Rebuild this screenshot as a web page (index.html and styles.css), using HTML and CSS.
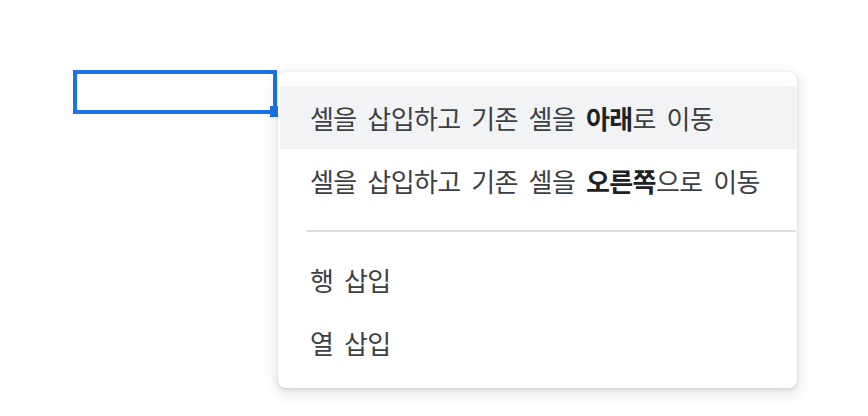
FILE: index.html
```html
<!DOCTYPE html>
<html lang="ko">
<head>
<meta charset="utf-8">
<title>셀 삽입</title>
<link rel="stylesheet" href="styles.css">
</head>
<body>
<div class="sheet">
  <div class="cell-select"><span class="fill-handle"></span></div>
  <div class="menu" role="menu">
    <div class="item active" role="menuitem"><span class="label">셀을 삽입하고 기존 셀을 <b>아래</b>로 이동</span></div>
    <div class="item" role="menuitem"><span class="label">셀을 삽입하고 기존 셀을 <b>오른쪽</b>으로 이동</span></div>
    <div class="sep"></div>
    <div class="item" role="menuitem"><span class="label">행 삽입</span></div>
    <div class="item" role="menuitem"><span class="label">열 삽입</span></div>
  </div>
</div>
</body>
</html>
```
FILE: styles.css
```css
html, body {
  margin: 0;
  padding: 0;
  background: #ffffff;
}
.sheet {
  position: relative;
  width: 868px;
  height: 416px;
  overflow: hidden;
  font-family: "Noto Sans CJK KR", "Noto Sans", sans-serif;
}
.cell-select {
  position: absolute;
  left: 73px;
  top: 70px;
  width: 196px;
  height: 36px;
  border: 4px solid #1a73e8;
}
.fill-handle {
  position: absolute;
  right: -8px;
  bottom: -7px;
  width: 11px;
  height: 11px;
  background: #1a73e8;
}
.menu {
  position: absolute;
  left: 278px;
  top: 72px;
  width: 516px;
  padding: 14px 1px 14px 2px;
  background: #ffffff;
  border-radius: 8px;
  box-shadow: 0 4px 12px 3px rgba(60, 64, 67, 0.12), 0 1px 3px rgba(60, 64, 67, 0.18);
  display: flex;
  flex-direction: column;
}
.item {
  height: 63px;
  display: flex;
  align-items: center;
  padding-left: 30px;
  font-size: 26px;
  letter-spacing: -0.6px;
  word-spacing: 4px;
  color: #3c4043;
  white-space: nowrap;
}
.item b {
  font-weight: 700;
  color: #202124;
}
.item.active {
  background: #f1f3f4;
}
.sep {
  height: 2px;
  margin: 18px 0 16px 26px;
  background: #dadce0;
}
```
